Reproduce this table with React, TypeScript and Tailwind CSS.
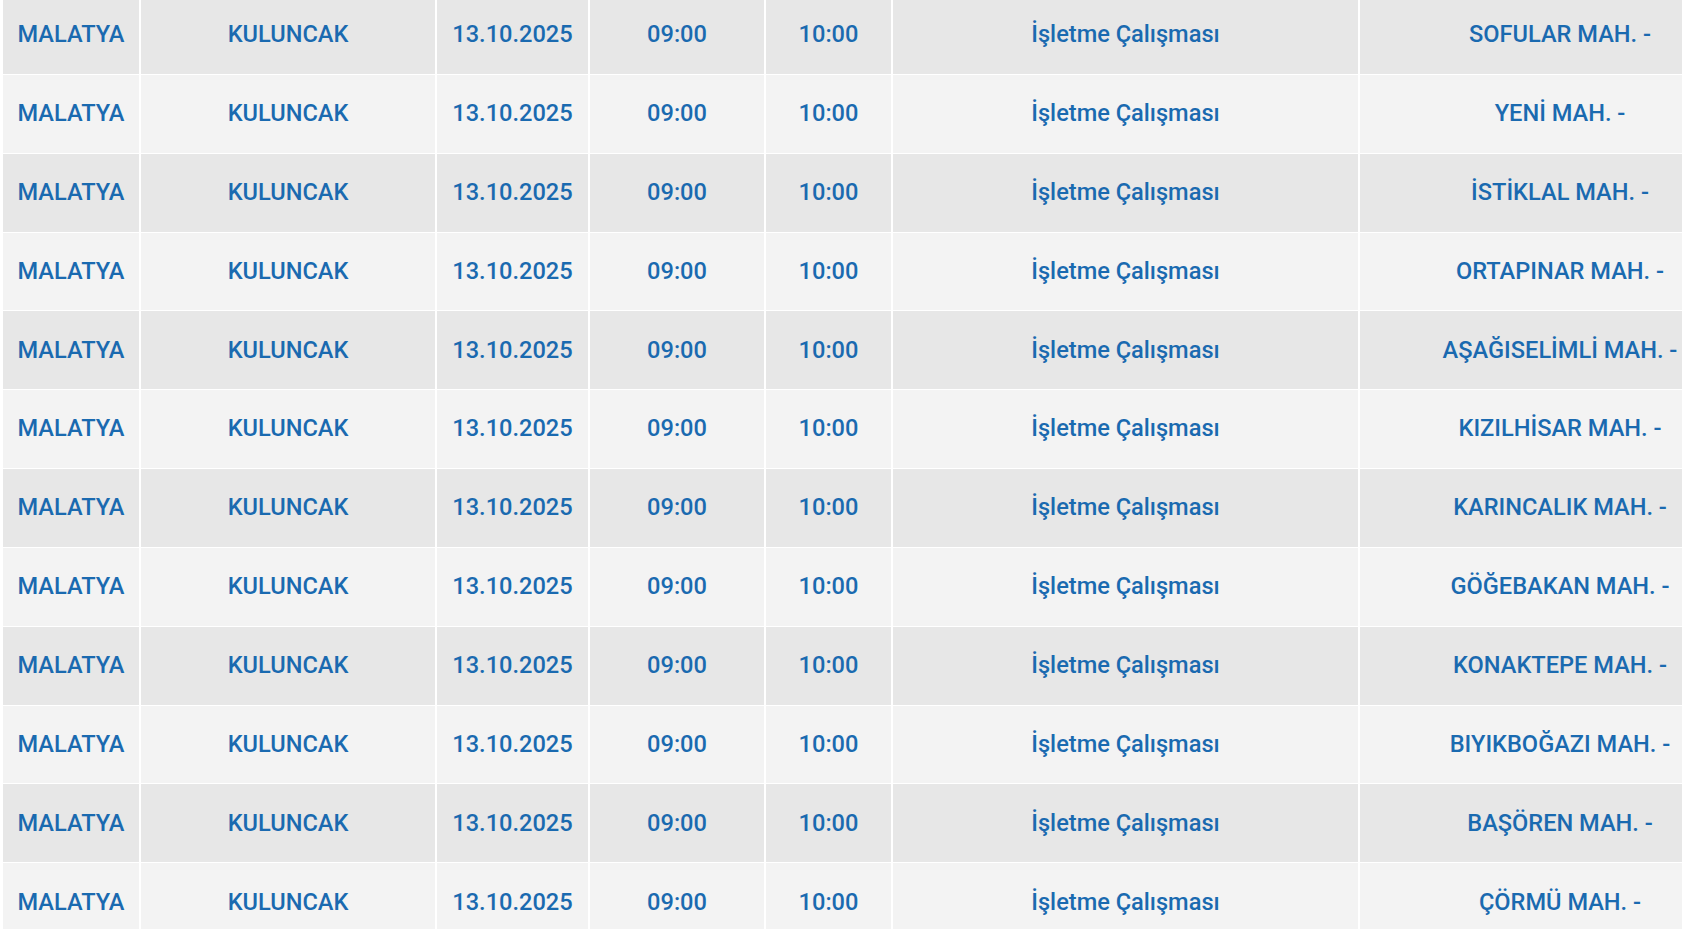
import React from "react";

const places = [
  "SOFULAR MAH. -",
  "YENİ MAH. -",
  "İSTİKLAL MAH. -",
  "ORTAPINAR MAH. -",
  "AŞAĞISELİMLİ MAH. -",
  "KIZILHİSAR MAH. -",
  "KARINCALIK MAH. -",
  "GÖĞEBAKAN MAH. -",
  "KONAKTEPE MAH. -",
  "BIYIKBOĞAZI MAH. -",
  "BAŞÖREN MAH. -",
  "ÇÖRMÜ MAH. -",
];

function Row({ place, index }: { place: string; index: number }) {
  const bg = index % 2 === 0 ? "bg-[#e7e7e7]" : "bg-[#f3f3f3]";
  const cell =
    "flex items-center justify-center border-r-2 border-white whitespace-nowrap";
  return (
    <div
      className={`grid grid-cols-[138px_296px_153px_176px_127px_467px_402px] h-[78.85px] border-b border-white ${bg}`}
    >
      <div className={cell}>MALATYA</div>
      <div className={cell}>KULUNCAK</div>
      <div className={cell}>13.10.2025</div>
      <div className={cell}>09:00</div>
      <div className={cell}>10:00</div>
      <div className={cell}>İşletme Çalışması</div>
      <div className={cell}>{place}</div>
    </div>
  );
}

export default function App() {
  return (
    <div className="w-[1682px] h-[929px] overflow-hidden bg-white">
      <div
        className="-mt-[4px] ml-[3px] w-max text-[23.6px] font-medium text-[#1a6ab0]"
        style={{ fontFamily: "Roboto, 'Liberation Sans', sans-serif" }}
      >
        {places.map((p, i) => (
          <Row key={i} place={p} index={i} />
        ))}
      </div>
    </div>
  );
}
